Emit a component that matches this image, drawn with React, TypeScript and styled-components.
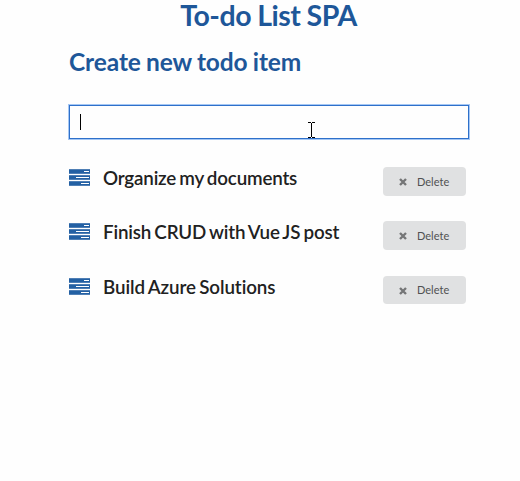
import React from "react";
import styled, { createGlobalStyle } from "styled-components";

const Global = createGlobalStyle`
  *{box-sizing:border-box}
  body{margin:0;background:#fefefe;font-family:Lato,sans-serif;color:#212121;overflow:hidden;font-variant-ligatures:none}
`;
const Page = styled.main`
  height: 481px;
`;
const Title = styled.h1`
  margin: 0;
  padding-left: 17px;
  text-align: center;
  font-size: 28.5px;
  line-height: 31px;
  font-weight: 700;
  letter-spacing: -0.45px;
  word-spacing: -0.5px;
  color: #1e5799;
`;
const Content = styled.section`
  width: 400px;
  margin: 15px 0 0 69px;
`;
const Heading = styled.h2`
  margin: 0;
  font-size: 24.5px;
  line-height: 32px;
  font-weight: 700;
  letter-spacing: -0.1px;
  word-spacing: -0.6px;
  color: #1e5799;
`;
const Field = styled.div`
  position: relative;
  width: 400px;
  height: 34px;
  margin: 27px 0 27px;
  border: 1px solid #2e70ca;
  box-shadow: 0 0 0 1px #a5c7f4;
`;
const Input = styled.input`
  display: block;
  width: 100%;
  height: 100%;
  padding: 0 10px;
  border: 0;
  outline: 0;
  background: transparent;
  font: 16px Lato, sans-serif;
`;
const Caret = styled.span`
  position: absolute;
  left: 10px;
  top: 8px;
  width: 1px;
  height: 16px;
  background: #000;
`;
const Pointer = styled.svg`
  position: absolute;
  left: 238px;
  top: 16px;
`;
const List = styled.ul`
  margin: 0;
  padding: 0;
  list-style: none;
`;
const Item = styled.li`
  display: flex;
  align-items: flex-start;
  height: 54.3px;
`;
const TaskIcon = styled.svg`
  margin-top: 3px;
`;
const Label = styled.span<{ $tracking: number }>`
  flex: 1;
  margin-left: 13px;
  font-size: 18.8px;
  line-height: 24px;
  font-weight: 600;
  letter-spacing: ${({ $tracking }) => $tracking}px;
  word-spacing: -1.3px;
  white-space: nowrap;
`;
const Delete = styled.button`
  display: flex;
  align-items: center;
  width: 83px;
  height: 28.5px;
  margin: 1px 3px 0 0;
  padding: 0 0 0 16px;
  border: 0;
  border-radius: 4px;
  background: #e0e1e2;
  color: #505152;
  font: 11px Lato, sans-serif;
`;
const CrossIcon = styled.svg`
  margin-top: 1.5px;
`;
const Caption = styled.span`
  margin-left: 10px;
`;

const Tasks = () => (
  <TaskIcon width="21" height="17" viewBox="0 0 21 17" shapeRendering="crispEdges">
    <path fill="#2360a3" d="M0 0h21v5H0zM0 6h21v5H0zM0 12h21v5H0z" />
    <path fill="#fff" d="M15 2h5v1h-5zM7 8h13v1H7zM12 14h8v1h-8z" />
    <path fill="#fefefe" opacity=".2" d="M0 0h21v1H0zM0 4h21v1H0zM0 6h21v1H0zM0 10h21v1H0zM0 12h21v1H0zM0 16h21v1H0z" />
  </TaskIcon>
);
const Cross = () => (
  <CrossIcon width="8" height="8" viewBox="0 0 8 8">
    <path d="M1 1l6 6M7 1L1 7" stroke="#757677" strokeWidth="2.4" />
  </CrossIcon>
);

const todos = [
  { text: "Organize my documents", tracking: -0.18 },
  { text: "Finish CRUD with Vue JS post", tracking: -0.17 },
  { text: "Build Azure Solutions", tracking: -0.08 },
];

export default function App() {
  return (
    <Page>
      <Global />
      <Title>To-do List SPA</Title>
      <Content>
        <Heading>Create new todo item</Heading>
        <Field>
          <Input aria-label="Create new todo item" />
          <Caret />
          <Pointer width="7" height="16" viewBox="0 0 7 16" shapeRendering="crispEdges">
            <path d="M0 0h3v1H0zM4 0h3v1H4zM3 1h1v14H3zM0 15h3v1H0zM4 15h3v1H4z" />
          </Pointer>
        </Field>
        <List>
          {todos.map(({ text, tracking }) => (
            <Item key={text}>
              <Tasks />
              <Label $tracking={tracking}>{text}</Label>
              <Delete>
                <Cross />
                <Caption>Delete</Caption>
              </Delete>
            </Item>
          ))}
        </List>
      </Content>
    </Page>
  );
}
